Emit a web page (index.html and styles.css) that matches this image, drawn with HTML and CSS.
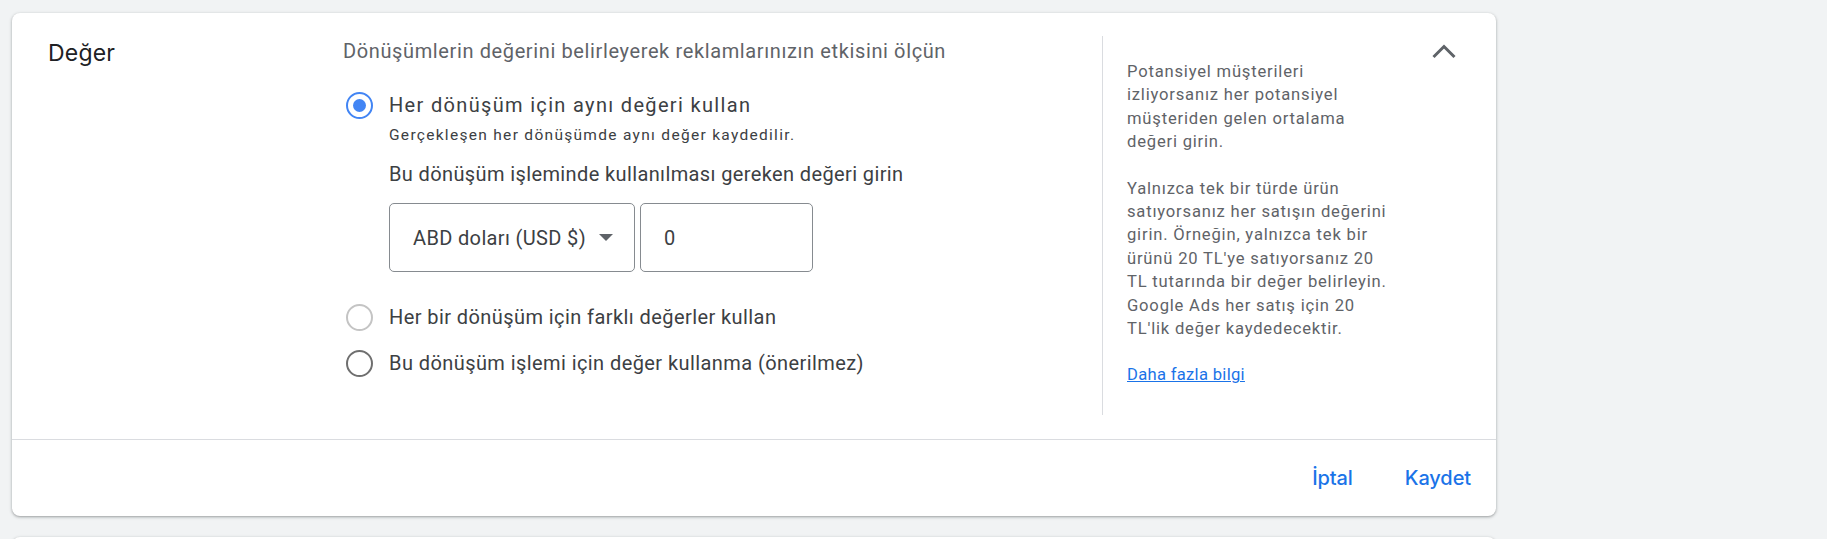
FILE: index.html
```html
<!DOCTYPE html>
<html lang="tr">
<head>
<meta charset="utf-8">
<title>Değer</title>
<link rel="stylesheet" href="styles.css">
</head>
<body>
<div class="page">
  <section class="card">
    <div class="card-body">
      <h2 class="card-title">Değer</h2>

      <div class="main-col">
        <p class="lead">Dönüşümlerin değerini belirleyerek reklamlarınızın etkisini ölçün</p>

        <div class="option option-first">
          <span class="radio radio-checked"></span>
          <div class="option-text">
            <div class="option-label option-label-selected">Her dönüşüm için aynı değeri kullan</div>
            <div class="option-hint">Gerçekleşen her dönüşümde aynı değer kaydedilir.</div>
            <div class="field-label">Bu dönüşüm işleminde kullanılması gereken değeri girin</div>
            <div class="fields">
              <div class="select">
                <span>ABD doları (USD $)</span>
                <span class="caret"></span>
              </div>
              <div class="input">0</div>
            </div>
          </div>
        </div>

        <div class="option">
          <span class="radio radio-light"></span>
          <div class="option-label">Her bir dönüşüm için farklı değerler kullan</div>
        </div>
        <div class="option">
          <span class="radio radio-dark"></span>
          <div class="option-label">Bu dönüşüm işlemi için değer kullanma (önerilmez)</div>
        </div>
      </div>

      <aside class="help">
        <p>Potansiyel müşterileri izliyorsanız her potansiyel müşteriden gelen ortalama değeri girin.</p>
        <p>Yalnızca tek bir türde ürün satıyorsanız her satışın değerini girin. Örneğin, yalnızca tek bir ürünü 20 TL'ye satıyorsanız 20 TL tutarında bir değer belirleyin. Google Ads her satış için 20 TL'lik değer kaydedecektir.</p>
        <p><a href="#" class="help-link">Daha fazla bilgi</a></p>
      </aside>

      <div class="collapse-col">
        <button class="collapse" type="button" aria-label="Daralt">
          <svg width="24" height="24" viewBox="0 0 24 24"><path d="M1.5 17 L12 6.5 L22.5 17" fill="none" stroke="#5f6368" stroke-width="3"/></svg>
        </button>
      </div>
    </div>

    <div class="card-footer">
      <button class="text-btn" type="button">İptal</button>
      <button class="text-btn" type="button">Kaydet</button>
    </div>
  </section>

  <section class="card card-next"></section>
</div>
</body>
</html>
```

FILE: styles.css
```css
html, body {
  margin: 0;
  padding: 0;
}

body {
  background: #f1f3f4;
  font-family: Roboto, "Liberation Sans", Arial, sans-serif;
  color: #3c4043;
  overflow: hidden;
}

.page {
  padding: 13px 0 0 12px;
}

.card {
  width: 1484px;
  background: #fff;
  border-radius: 8px;
  box-shadow: 0 1px 2px 0 rgba(60, 64, 67, 0.3), 0 1px 3px 1px rgba(60, 64, 67, 0.15);
}

.card-next {
  margin-top: 21px;
  height: 80px;
}

.card-body {
  display: flex;
  align-items: flex-start;
  height: 426px;
  box-sizing: border-box;
  padding-top: 23px;
}

.card-title {
  flex: none;
  width: 331px;
  box-sizing: border-box;
  margin: 2px 0 0;
  padding-left: 36px;
  font-family: Inter, "Open Sans", sans-serif;
  font-weight: 400;
  font-size: 23px;
  line-height: 30px;
  color: #202124;
  letter-spacing: 0.2px;
}

.main-col {
  flex: none;
  width: 759px;
  margin-top: 1px;
}

.lead {
  margin: 0;
  font-size: 20px;
  line-height: 28px;
  letter-spacing: 0.62px;
  color: #5f6368;
}

.option {
  display: flex;
  align-items: center;
  height: 46px;
  padding-left: 3px;
}

.option-first {
  align-items: flex-start;
  height: auto;
  margin-top: 26px;
  margin-bottom: 22px;
}

.radio {
  flex: none;
  width: 27px;
  height: 27px;
  box-sizing: border-box;
  border-radius: 50%;
  border: 2.5px solid #5f6368;
  margin-right: 16px;
  position: relative;
}

.option-first .radio {
  margin-top: 1px;
}

.radio-checked {
  border-color: #4285f4;
}

.radio-checked::after {
  content: "";
  position: absolute;
  left: 4.5px;
  top: 4.5px;
  width: 13px;
  height: 13px;
  border-radius: 50%;
  background: #4285f4;
}

.radio-light {
  border-color: #c4c4c4;
}

.radio-dark {
  border-color: #6f6f6f;
}

.option-label {
  font-size: 20px;
  line-height: 28px;
  letter-spacing: 0.42px;
  color: #3c4043;
}

.option-label-selected {
  letter-spacing: 1.33px;
}

.option-hint {
  margin-top: 6px;
  font-size: 15.5px;
  line-height: 20px;
  letter-spacing: 1.3px;
  color: #3c4043;
}

.field-label {
  margin-top: 15px;
  font-size: 20px;
  line-height: 28px;
  letter-spacing: 0.38px;
  color: #3c4043;
}

.fields {
  display: flex;
  gap: 5px;
  margin-top: 15px;
}

.select,
.input {
  box-sizing: border-box;
  height: 69px;
  border: 1px solid #868b90;
  border-radius: 5px;
  display: flex;
  align-items: center;
  font-size: 20px;
  letter-spacing: 0.35px;
  color: #3c4043;
}

.select {
  width: 246px;
  padding-left: 23px;
}

.caret {
  width: 0;
  height: 0;
  margin-left: 13px;
  border-left: 7px solid transparent;
  border-right: 7px solid transparent;
  border-top: 7px solid #5f6368;
}

.input {
  width: 173px;
  padding-left: 23px;
}

.help {
  flex: none;
  width: 262px;
  height: 355px;
  padding: 24px 31px 0 24px;
  border-left: 1px solid #dadce0;
  box-sizing: content-box;
  font-size: 16.6px;
  line-height: 23.4px;
  letter-spacing: 0.8px;
  color: #5f6368;
}

.help p {
  margin: 0 0 23px;
}

.help-link {
  color: #1a73e8;
  text-decoration: underline;
  letter-spacing: 0.3px;
}

.collapse-col {
  flex: 1;
  display: flex;
  justify-content: flex-end;
  padding-right: 28px;
  margin-top: -8px;
}

.collapse {
  width: 48px;
  height: 48px;
  border: 0;
  padding: 0;
  background: none;
  display: flex;
  align-items: center;
  justify-content: center;
}

.card-footer {
  height: 77px;
  box-sizing: border-box;
  border-top: 1px solid #dadce0;
  display: flex;
  align-items: center;
  justify-content: flex-end;
  gap: 28px;
  padding-right: 13px;
}

.text-btn {
  border: 0;
  background: none;
  padding: 8px 12px;
  font-family: Inter, "Open Sans", sans-serif;
  font-size: 20px;
  font-weight: 500;
  color: #1a73e8;
  letter-spacing: -0.1px;
}
```
